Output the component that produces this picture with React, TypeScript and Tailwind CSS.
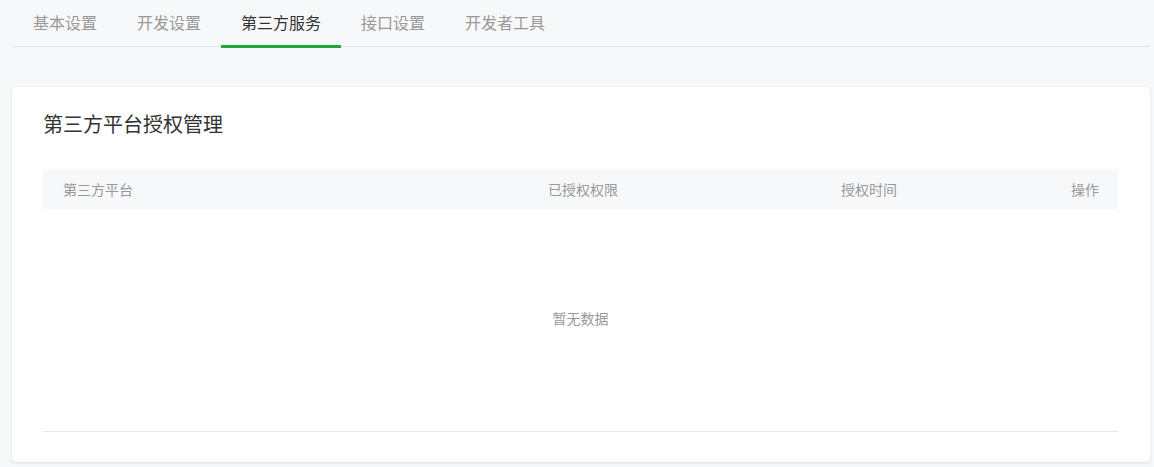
import React from "react";

const tabs = ["基本设置", "开发设置", "第三方服务", "接口设置", "开发者工具"];

export default function App() {
  return (
    <div
      className="w-[1154px] h-[467px] bg-[#f7f8fa] overflow-hidden"
      style={{ fontFamily: '"Noto Sans CJK SC", "Noto Sans", sans-serif' }}
    >
      <div className="ml-[12px] mr-[4px] pl-[1px] flex border-b border-[#e6e7ea] h-[47px]">
        {tabs.map((t, i) => (
          <div
            key={t}
            className={
              "px-[20px] h-[47px] flex items-center text-[16px] relative " +
              (i === 2 ? "text-[#333333]" : "text-[#999999]")
            }
          >
            <span className="-mt-[4px]">{t}</span>
            {i === 2 && (
              <div className="absolute left-0 right-0 bottom-[-1px] h-[3px] bg-[#20a53a]" />
            )}
          </div>
        ))}
      </div>
      <div className="mt-[40px] ml-[12px] mr-[4px] bg-white rounded-[4px] shadow-[0_1px_3px_rgba(0,0,0,0.12)] px-[31px] pr-[32px] pt-[22px] pb-[30px]">
        <div className="text-[20px] leading-[30px] text-[#333333]">第三方平台授权管理</div>
        <div className="mt-[30px] h-[40px] bg-[#f7f8fa] flex items-center text-[14px] text-[#999999]">
          <div className="w-[485px] pl-[20px]">第三方平台</div>
          <div className="w-[293px] pl-[20px]">已授权权限</div>
          <div className="flex-1 pl-[20px]">授权时间</div>
          <div className="pr-[19px]">操作</div>
        </div>
        <div className="h-[223px] flex items-center justify-center border-b border-[#e6e6e6] text-[14px] text-[#999999]">
          <span className="-mt-[3px]">暂无数据</span>
        </div>
      </div>
    </div>
  );
}
